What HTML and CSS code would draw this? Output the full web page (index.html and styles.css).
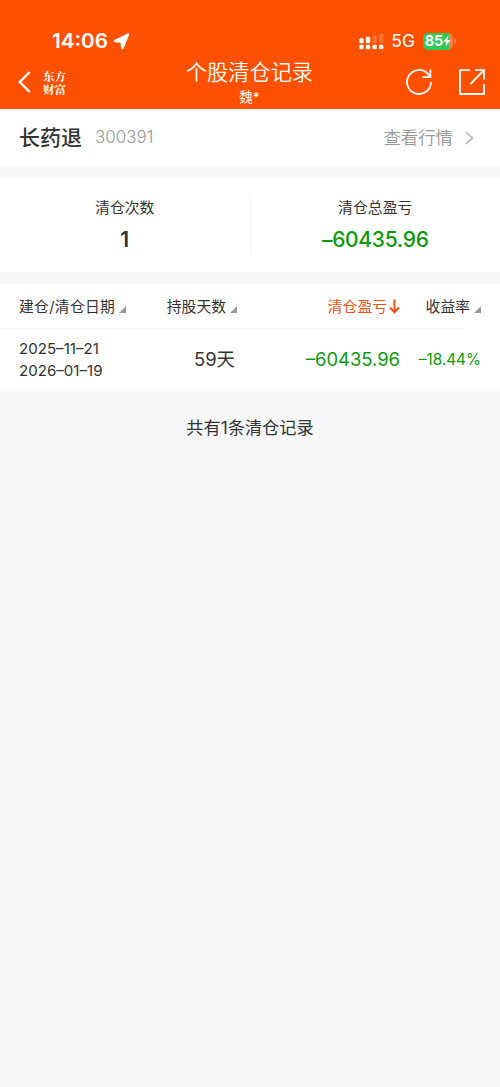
FILE: index.html
```html
<!DOCTYPE html>
<html lang="zh-CN">

<head>
    <meta charset="UTF-8">
    <meta name="viewport" content="width=device-width, initial-scale=1.0">
    <title>个股清仓记录</title>
    <link rel="stylesheet" href="styles.css">
</head>

<body>
    <header class="header">
        <div class="status-bar">
            <div class="status-left">
                <span class="time">14:06</span>
                <svg class="location" width="17" height="17" viewBox="0 0 17 17">
                    <path d="M15.6 1.4 L10 15.2 Q9.3 16.4 8.7 15 L8 9.2 L2 8.6 Q0.6 8.1 2 7.2 L14.8 1.1 Q15.8 0.7 15.6 1.4Z" fill="#fff" stroke="#fff" stroke-width="1.2" stroke-linejoin="round" />
                </svg>
            </div>
            <div class="status-right">
                <svg class="signal" width="26" height="17" viewBox="0 0 26 17" fill="#fff">
                    <rect x="0.3" y="5.3" width="4.3" height="5" rx="1.2" />
                    <rect x="6.9" y="3.8" width="4.3" height="6.5" rx="1.2" />
                    <rect x="13.5" y="2" width="4.3" height="8.3" rx="1.2" opacity=".2" />
                    <rect x="20.1" y="0" width="4.3" height="10.3" rx="1.2" opacity=".2" />
                    <rect x="0.3" y="11.8" width="4.3" height="4.5" rx="1.4" />
                    <rect x="6.9" y="11.8" width="4.3" height="4.5" rx="1.4" />
                    <rect x="13.5" y="11.8" width="4.3" height="4.5" rx="1.4" />
                    <rect x="20.1" y="11.8" width="4.3" height="4.5" rx="1.4" />
                </svg>
                <span class="network">5G</span>
                <div class="battery">
                    <span>85</span>
                    <svg width="8" height="12" viewBox="0 0 8 12">
                        <path d="M5.5 0.5 L0.3 6.8 H3.4 L2.4 11.5 L7.7 5 H4.5Z" fill="#fff" />
                    </svg>
                </div>
                <i class="battery-cap"></i>
            </div>
        </div>
        <nav class="nav">
            <div class="nav-left">
                <svg width="13" height="22" viewBox="0 0 13 22" fill="none" stroke="#fff" stroke-width="2.4">
                    <path d="M11.7 1 L1.8 11 L11.7 21" />
                </svg>
                <div class="logo">
                    <span>东方</span>
                    <span>财富</span>
                </div>
            </div>
            <div class="nav-title">
                <h1>个股清仓记录</h1>
                <p>魏*</p>
            </div>
            <div class="nav-right">
                <svg width="28" height="28" viewBox="0 0 28 28" fill="none" stroke="#fff" stroke-width="1.8">
                    <path d="M26 14 A12 12 0 1 1 22.6 5.6 L25 8.8" />
                    <path d="M25.4 1.5 V9.2 H17.5" />
                </svg>
                <svg width="28" height="28" viewBox="0 0 28 28" fill="none" stroke="#fff" stroke-width="1.8">
                    <path d="M12 2.2 H2 V26 H26 V16" />
                    <path d="M17 2.2 H26 V11.5 M26 2.2 L12.5 16" />
                </svg>
            </div>
        </nav>
    </header>

    <main>
        <section class="stock">
            <h2>长药退</h2>
            <span class="code">300391</span>
            <a class="quote">查看行情
                <svg width="9" height="14" viewBox="0 0 9 14" fill="none" stroke="#c4c4c4" stroke-width="2.1">
                    <path d="M1 1 L7.3 7 L1 13" />
                </svg>
            </a>
        </section>

        <section class="summary">
            <div class="summary-item">
                <p>清仓次数</p>
                <strong>1</strong>
            </div>
            <div class="summary-item">
                <p>清仓总盈亏</p>
                <strong class="loss">–60435.96</strong>
            </div>
        </section>

        <section class="records">
            <div class="row row-head">
                <span class="date">建仓/清仓日期<i class="sort"></i></span>
                <span class="days">持股天数<i class="sort"></i></span>
                <span class="profit sorted">清仓盈亏<svg width="11" height="15" viewBox="0 0 11 15" fill="none" stroke="#e8541a" stroke-width="2">
                        <path d="M5.5 0.5 V13 M1 8.5 L5.5 13.2 L10 8.5" />
                    </svg></span>
                <span class="rate">收益率<i class="sort"></i></span>
            </div>
            <div class="row row-body">
                <span class="date">2025–11–21<br>2026–01–19</span>
                <span class="days">59天</span>
                <span class="profit loss">–60435.96</span>
                <span class="rate loss">–18.44%</span>
            </div>
        </section>

        <p class="total">共有1条清仓记录</p>
    </main>
</body>

</html>
```

FILE: styles.css
```css
* {
    padding: 0;
    margin: 0;
    box-sizing: border-box;
}

body {
    min-height: 1087px;
    background-color: #f7f8fa;
    color: #333;
    font-family: Inter, "Noto Sans CJK SC", sans-serif;
    line-height: 1;
}

/**** HEADER ****/

.header {
    height: 109px;
    padding-top: 29px;
    background-color: #ff5000;
    color: #fff;
}

.status-bar {
    display: flex;
    justify-content: space-between;
    height: 24px;
    padding: 0 44px 0 52px;
}

.status-left,
.status-right {
    display: flex;
    align-items: center;
}

.time {
    font-size: 20.7px;
    font-weight: 600;
}

.location {
    margin-left: 5px;
}

.network {
    margin-left: 6px;
    font-size: 17.5px;
}

.battery {
    display: flex;
    align-items: center;
    justify-content: center;
    width: 30px;
    height: 17px;
    margin-left: 8px;
    border-radius: 5px;
    background: linear-gradient(90deg, #32c85a 86%, #ff7a40 86%);
    font-size: 14.5px;
    font-weight: 700;
}

.battery-cap {
    width: 2px;
    height: 6px;
    margin-left: 1px;
    border-radius: 0 2px 2px 0;
    background-color: #ff7a40;
}

.nav {
    display: grid;
    grid-template-columns: 1fr 140px 1fr;
    height: 56px;
    padding: 1px 14px 0 18px;
}

.nav-left,
.nav-right {
    display: flex;
    align-items: center;
}

.nav-right {
    justify-content: flex-end;
    gap: 25px;
}

.nav-right svg {
    margin-top: -1px;
}

.logo {
    display: flex;
    flex-direction: column;
    gap: 1px;
    margin-left: 12px;
    font-family: "Noto Serif CJK SC", "Noto Sans CJK SC", sans-serif;
    font-size: 11.5px;
    font-weight: 700;
    line-height: 12px;
}

.nav-title {
    margin-left: -5px;
    padding-top: 6px;
    text-align: center;
}

.nav-title h1 {
    font-size: 21.2px;
    font-weight: 350;
    line-height: 24px;
}

.nav-title p {
    padding-top: 1px;
    font-size: 13.5px;
    line-height: 25px;
}

/**** STOCK ****/

.stock {
    display: flex;
    align-items: center;
    height: 57px;
    padding: 0 26px 0 19px;
    background-color: #fff;
}

.stock h2 {
    font-size: 21px;
    font-weight: 500;
}

.code {
    margin-left: 13px;
    color: #999;
    font-size: 17px;
    font-weight: 300;
}

.quote {
    display: flex;
    align-items: center;
    gap: 12px;
    margin-left: auto;
    color: #999;
    font-size: 17.4px;
    font-weight: 350;
}

/**** SUMMARY ****/

.summary {
    display: flex;
    align-items: center;
    height: 94px;
    margin: 12px 0;
    background-color: #fff;
}

.summary-item {
    flex: 1;
    height: 60px;
    padding-top: 5px;
    text-align: center;
}

.summary-item + .summary-item {
    border-left: 1px solid #f5f5f7;
}

.summary-item p {
    font-size: 14.8px;
    line-height: 16px;
}

.summary-item strong {
    display: block;
    margin-top: 13px;
    font-size: 21px;
    font-weight: 600;
    line-height: 22px;
}

.summary-item .loss {
    font-weight: 500;
    letter-spacing: -0.3px;
}

.loss {
    color: #0c9a0c;
}

/**** RECORDS ****/

.records {
    background-color: #fff;
}

.row {
    display: grid;
    grid-template-columns: 118px 100px 163px 81px;
    align-items: center;
    padding-left: 19px;
}

.row-head {
    height: 44px;
    padding-top: 2px;
    font-size: 14.8px;
}

.row-head .date {
    letter-spacing: 0.3px;
}

.row-body {
    position: relative;
    height: 63px;
    font-size: 18px;
}

.row-body::before {
    content: "";
    position: absolute;
    top: 0;
    left: 0;
    width: 464px;
    height: 1px;
    background-color: #f5f5f5;
}

.days,
.profit,
.rate {
    text-align: right;
}

.date,
.rate {
    white-space: nowrap;
}

.row-body .date {
    font-size: 15.1px;
    line-height: 21.5px;
}

.row-body .days {
    padding-right: 2px;
    font-size: 18.4px;
}

.row-body .profit {
    font-size: 18.4px;
}

.row-body .rate {
    font-size: 15.3px;
}

.row-head .profit {
    margin-top: -1px;
}

.sorted {
    color: #e8541a;
}

.sorted svg {
    margin-left: 2px;
    vertical-align: -2px;
}

.sort {
    display: inline-block;
    margin-left: 4px;
    border-bottom: 7px solid #999;
    border-left: 7px solid transparent;
    vertical-align: -1px;
}

.total {
    margin-top: 27px;
    font-size: 17.2px;
    line-height: 20px;
    text-align: center;
}
```
